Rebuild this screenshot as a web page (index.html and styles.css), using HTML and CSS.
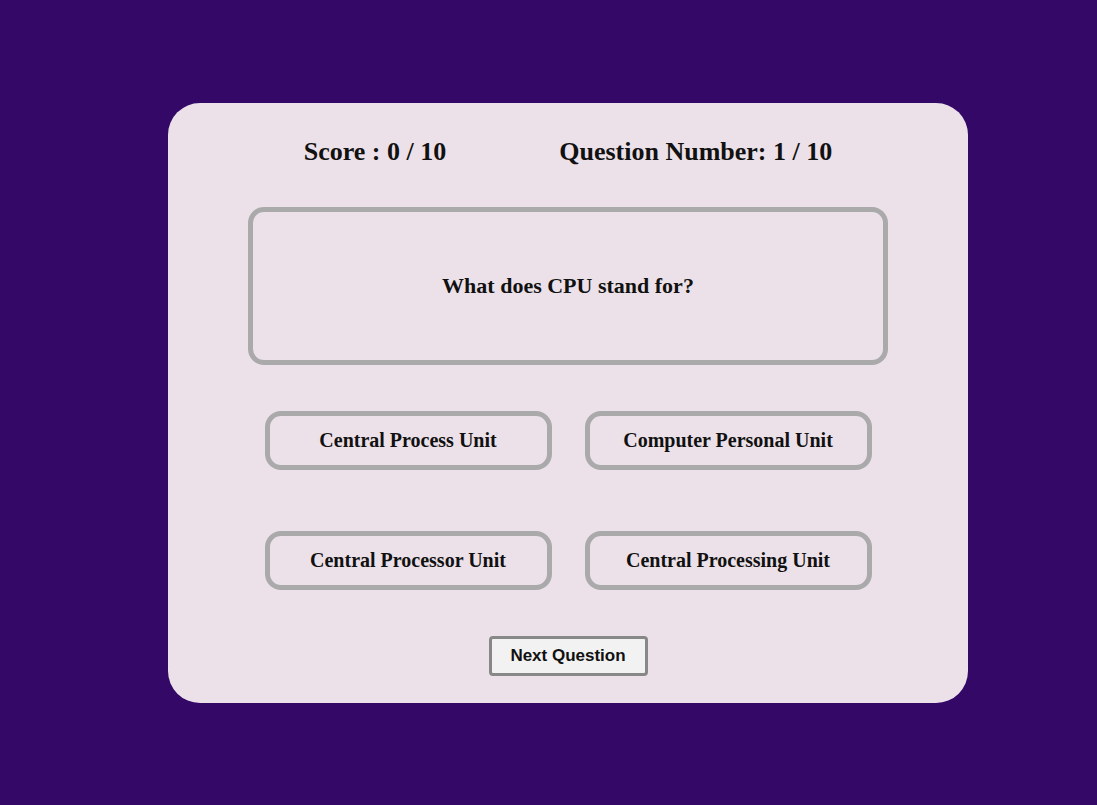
FILE: index.html
```html
<!DOCTYPE html>
<html>
<head>
<meta charset="utf-8">
<link rel="stylesheet" href="styles.css">
</head>
<body>
<div class="card">
  <div class="stats">
    <span class="stat">Score : 0 / 10</span>
    <span class="stat">Question Number: 1 / 10</span>
  </div>
  <div class="question">What does CPU stand for?</div>
  <div class="answers">
    <div class="answer">Central Process Unit</div>
    <div class="answer">Computer Personal Unit</div>
    <div class="answer">Central Processor Unit</div>
    <div class="answer">Central Processing Unit</div>
  </div>
  <button class="next">Next Question</button>
</div>
</body>
</html>
```
FILE: styles.css
```css
html, body {
  margin: 0;
  padding: 0;
  background: #330867;
}
body {
  width: 1097px;
  height: 805px;
  padding-top: 103px;
  padding-left: 168px;
  box-sizing: border-box;
  font-family: "Liberation Serif", "Times New Roman", serif;
}
.card {
  width: 800px;
  height: 600px;
  background: #ece1e9;
  border-radius: 32px;
  box-sizing: border-box;
  padding-top: 34px;
  display: flex;
  flex-direction: column;
  align-items: center;
  color: #111;
}
.stats {
  display: flex;
  gap: 113px;
  font-size: 26px;
  font-weight: bold;
  line-height: 30px;
  height: 30px;
}
.question {
  margin-top: 40px;
  width: 640px;
  height: 158px;
  box-sizing: border-box;
  border: 5px solid #aaaaaa;
  border-radius: 16px;
  display: flex;
  align-items: center;
  justify-content: center;
  font-size: 22px;
  font-weight: bold;
}
.answers {
  margin-top: 46px;
  display: grid;
  grid-template-columns: 287px 287px;
  column-gap: 33px;
  row-gap: 61px;
}
.answer {
  height: 59px;
  box-sizing: border-box;
  border: 5px solid #aaaaaa;
  border-radius: 16px;
  display: flex;
  align-items: center;
  justify-content: center;
  font-size: 20px;
  font-weight: bold;
}
.next {
  margin-top: 46px;
  width: 159px;
  height: 40px;
  box-sizing: border-box;
  border: 3px solid #888888;
  border-radius: 4px;
  background: #f2f2f2;
  font-family: "Liberation Sans", Arial, sans-serif;
  font-size: 17px;
  font-weight: bold;
  color: #111;
  padding: 0;
}
```
